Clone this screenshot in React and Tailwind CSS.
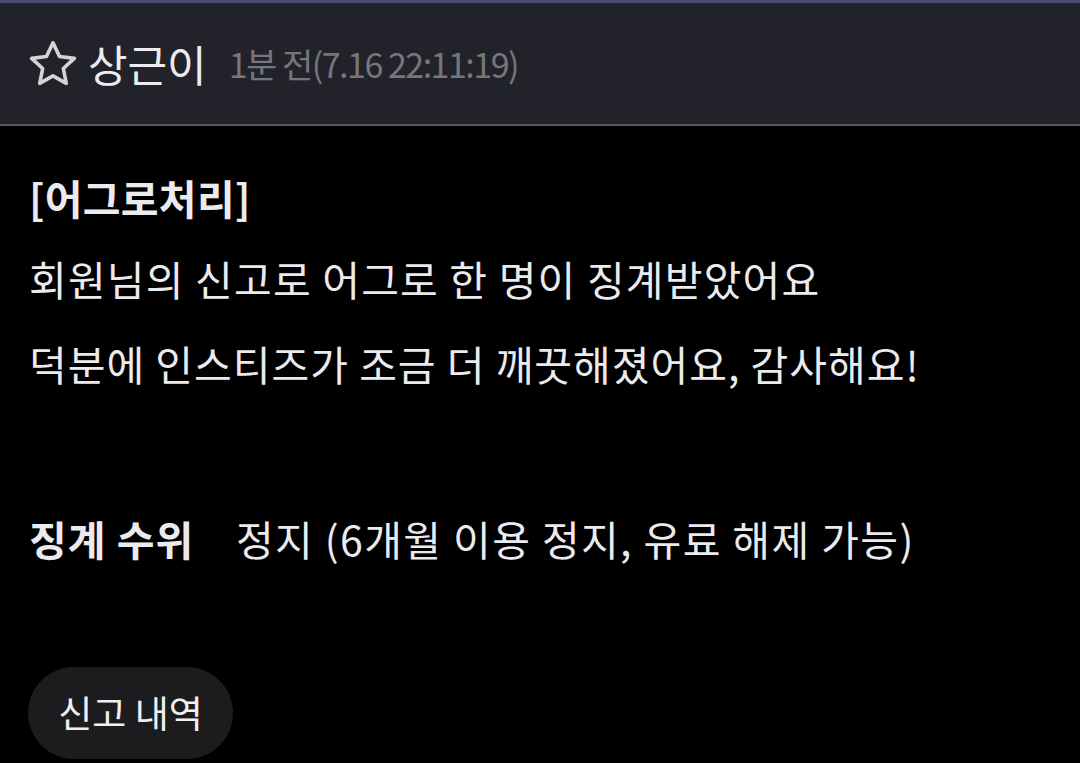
import React from "react";

const font = { fontFamily: '"Noto Sans CJK KR", "Noto Sans", sans-serif' };

function StarIcon() {
  return (
    <svg width="54" height="54" viewBox="0 0 24 24" fill="none" stroke="#d4d4d8" strokeWidth="1.6" strokeLinejoin="round" strokeLinecap="round">
      <path d="M12 2.6l2.9 6.1 6.6.8-4.9 4.5 1.3 6.6L12 17.3l-5.9 3.3 1.3-6.6-4.9-4.5 6.6-.8z" />
    </svg>
  );
}

export default function App() {
  return (
    <div style={font} className="w-[1080px] h-[763px] bg-black overflow-hidden text-[#ebebef]">
      <div className="h-[126px] bg-[#22222a] border-t-[3px] border-t-[#4a4a78] border-b-2 border-b-[#56565c] flex items-center pl-[26px]">
        <StarIcon />
        <span className="ml-[8px] text-[43px] text-[#ececf0] leading-none">상근이</span>
        <span className="ml-[22px] text-[34px] text-[#76767c] tracking-[-1.5px] leading-none">1분 전(7.16 22:11:19)</span>
      </div>
      <div className="pl-[29px] pt-[28px] flex flex-col">
        <div className="text-[41px] font-bold leading-[86px] tracking-[0.3px]">[어그로처리]</div>
        <div className="-mt-[5px] text-[41px] leading-[86px] tracking-[1.2px]">회원님의 신고로 어그로 한 명이 징계받았어요</div>
        <div className="-mt-[1px] text-[41px] leading-[86px] tracking-[1px]">덕분에 인스티즈가 조금 더 깨끗해졌어요, 감사해요!</div>
        <div className="mt-[89px] flex text-[41px] leading-[86px] tracking-[1px]">
          <span className="font-bold w-[207px]">징계 수위</span>
          <span className="tracking-[1.4px]">정지 (6개월 이용 정지, 유료 해제 가능)</span>
        </div>
        <div className="mt-[86px]">
          <div className="w-[205px] h-[92px] rounded-full bg-[#1c1c1f] flex items-center justify-center text-[37px] text-[#f0f0f2] -ml-[1px]">
            신고 내역
          </div>
        </div>
      </div>
    </div>
  );
}
